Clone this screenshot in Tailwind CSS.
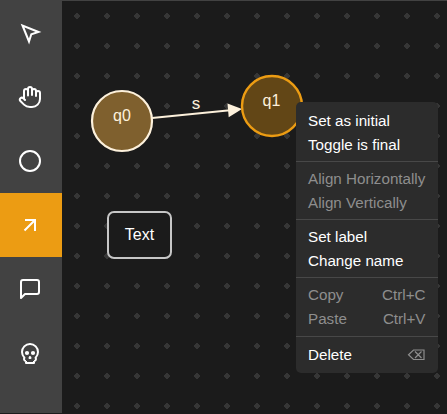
<!DOCTYPE html>
<html lang="en">
<head>
<meta charset="utf-8">
<title>Automaton editor</title>
<script src="https://cdn.jsdelivr.net/npm/@tailwindcss/browser@4"></script>
</head>
<body class="flex h-screen overflow-hidden bg-[#1b1b1b] font-['Liberation_Sans',Arial,sans-serif] text-white">
<nav class="flex h-full w-[62px] shrink-0 flex-col border-b border-[#1b1b1b] bg-[#424242] pt-px">
  <button class="flex h-16 w-full shrink-0 items-center justify-center pr-0.5" aria-label="Select">
    <svg class="size-6" viewBox="0 0 24 24" fill="none" stroke="currentColor" stroke-width="2" stroke-linejoin="miter"><path d="M4.500 4.500l6.500 16 2.300-7.200 7.200-2.300z"/></svg>
  </button>
  <button class="flex h-16 w-full shrink-0 items-center justify-center pr-0.5" aria-label="Pan">
    <svg class="size-6" viewBox="0 0 24 24" fill="none" stroke="currentColor" stroke-width="2" stroke-linecap="round" stroke-linejoin="round"><path d="M18 11V6a2 2 0 0 0-4 0M14 10V4a2 2 0 0 0-4 0v2M10 10.500V6a2 2 0 0 0-4 0v8M18 8a2 2 0 1 1 4 0v6a8 8 0 0 1-8 8h-2c-2.800 0-4.500-.86-5.990-2.340l-3.600-3.600a2 2 0 0 1 2.830-2.820L7 15"/></svg>
  </button>
  <button class="flex h-16 w-full shrink-0 items-center justify-center pr-0.5" aria-label="State">
    <svg class="size-6" viewBox="0 0 24 24" fill="none" stroke="currentColor" stroke-width="2"><circle cx="12" cy="12" r="10"/></svg>
  </button>
  <button class="flex h-16 w-full shrink-0 items-center justify-center bg-[#ec9c13] pr-0.5" aria-label="Transition">
    <svg class="size-6" viewBox="0 0 24 24" fill="none" stroke="currentColor" stroke-width="2"><path d="M6.500 17.500L17 7M7 7h10v11"/></svg>
  </button>
  <button class="flex h-16 w-full shrink-0 items-center justify-center pr-0.5" aria-label="Comment">
    <svg class="size-6" viewBox="0 0 24 24" fill="none" stroke="currentColor" stroke-width="2" stroke-linecap="round" stroke-linejoin="round"><path d="M21 15a2 2 0 0 1-2 2H7l-4 4V5a2 2 0 0 1 2-2h14a2 2 0 0 1 2 2z"/></svg>
  </button>
  <button class="flex h-16 w-full shrink-0 items-center justify-center pr-0.5" aria-label="Delete">
    <svg class="size-6" viewBox="0 0 24 24" fill="none" stroke="currentColor" stroke-width="2" stroke-linejoin="round"><path d="M8 20v2h8v-2M12.500 17l-.5-1-.5 1h1zM16 20a2 2 0 0 0 1.560-3.250 8 8 0 1 0-11.120 0A2 2 0 0 0 8 20"/><circle cx="9" cy="12" r="1.100"/><circle cx="15" cy="12" r="1.100"/></svg>
  </button>
</nav>
<main class="relative min-w-0 flex-1 border-t border-[#424242]">
  <svg class="absolute -top-px left-0 block h-[414px] w-[385px]" viewBox="62 0 385 414" font-size="16" fill="#fdf1dc">
    <defs>
      <pattern id="grid" x="62" y="1" width="30" height="30" patternUnits="userSpaceOnUse"><path d="M14 12h2v1h1v1h1v2h-1v1h-1v1h-2v-1h-1v-1h-1v-2h1v-1h1z" fill="#363636"/></pattern>
    </defs>
    <rect x="62" y="1" width="385" height="413" fill="url(#grid)"/>
    <path d="M152 118L230 110.200" stroke="#fdf1dc" stroke-width="2"/>
    <path d="M227.500 103.500L242 109L228.700 117.200Z"/>
    <text x="196" y="108.500" font-size="17" text-anchor="middle">s</text>
    <circle cx="122" cy="121" r="30" fill="#7f602e" stroke="#fdf1dc" stroke-width="2.200"/>
    <text x="122" y="121" text-anchor="middle">q0</text>
    <circle cx="272" cy="106" r="30" fill="#624616" stroke="#ec9c13" stroke-width="2.400"/>
    <text x="271.500" y="106" text-anchor="middle">q1</text>
  </svg>
  <div class="absolute left-[45px] top-[210px] flex h-12 w-[65px] items-center justify-center rounded-[7px] border-2 border-[#c6c6c6] bg-[#1b1b1b] text-base">Text</div>
  <div class="absolute left-[234px] top-[101px] h-[271px] w-[142px] rounded-[5px] bg-[#2c2c2c] py-[7px] text-[15.2px] leading-6">
    <div class="px-3">Set as initial</div>
    <div class="px-3">Toggle is final</div>
    <hr class="mt-1 mb-[5px] border-t border-[#484848]">
    <div class="px-3 whitespace-nowrap text-[#8e8e8e]">Align Horizontally</div>
    <div class="px-3 text-[#8e8e8e]">Align Vertically</div>
    <hr class="mt-1 mb-[5px] border-t border-[#484848]">
    <div class="px-3">Set label</div>
    <div class="px-3">Change name</div>
    <hr class="mt-1 mb-[5px] border-t border-[#484848]">
    <div class="flex justify-between pr-[12.500px] pl-3 text-[#8e8e8e]"><span>Copy</span><span>Ctrl+C</span></div>
    <div class="flex justify-between pr-[12.500px] pl-3 text-[#8e8e8e]"><span>Paste</span><span>Ctrl+V</span></div>
    <hr class="mt-[5px] mb-1.5 border-t border-[#484848]">
    <div class="flex items-center justify-between pr-[13px] pl-3"><span>Delete</span>
      <svg class="h-3 w-[18px] text-[#8e8e8e]" viewBox="0 0 18 12" fill="none" stroke="currentColor" stroke-width="1.200"><path d="M6.500 1h10.500v9.500H6.500L1.500 5.750zM8 2.500l6.500 6.500M14.500 2.500L8 9"/></svg>
    </div>
  </div>
</main>
</body>
</html>
